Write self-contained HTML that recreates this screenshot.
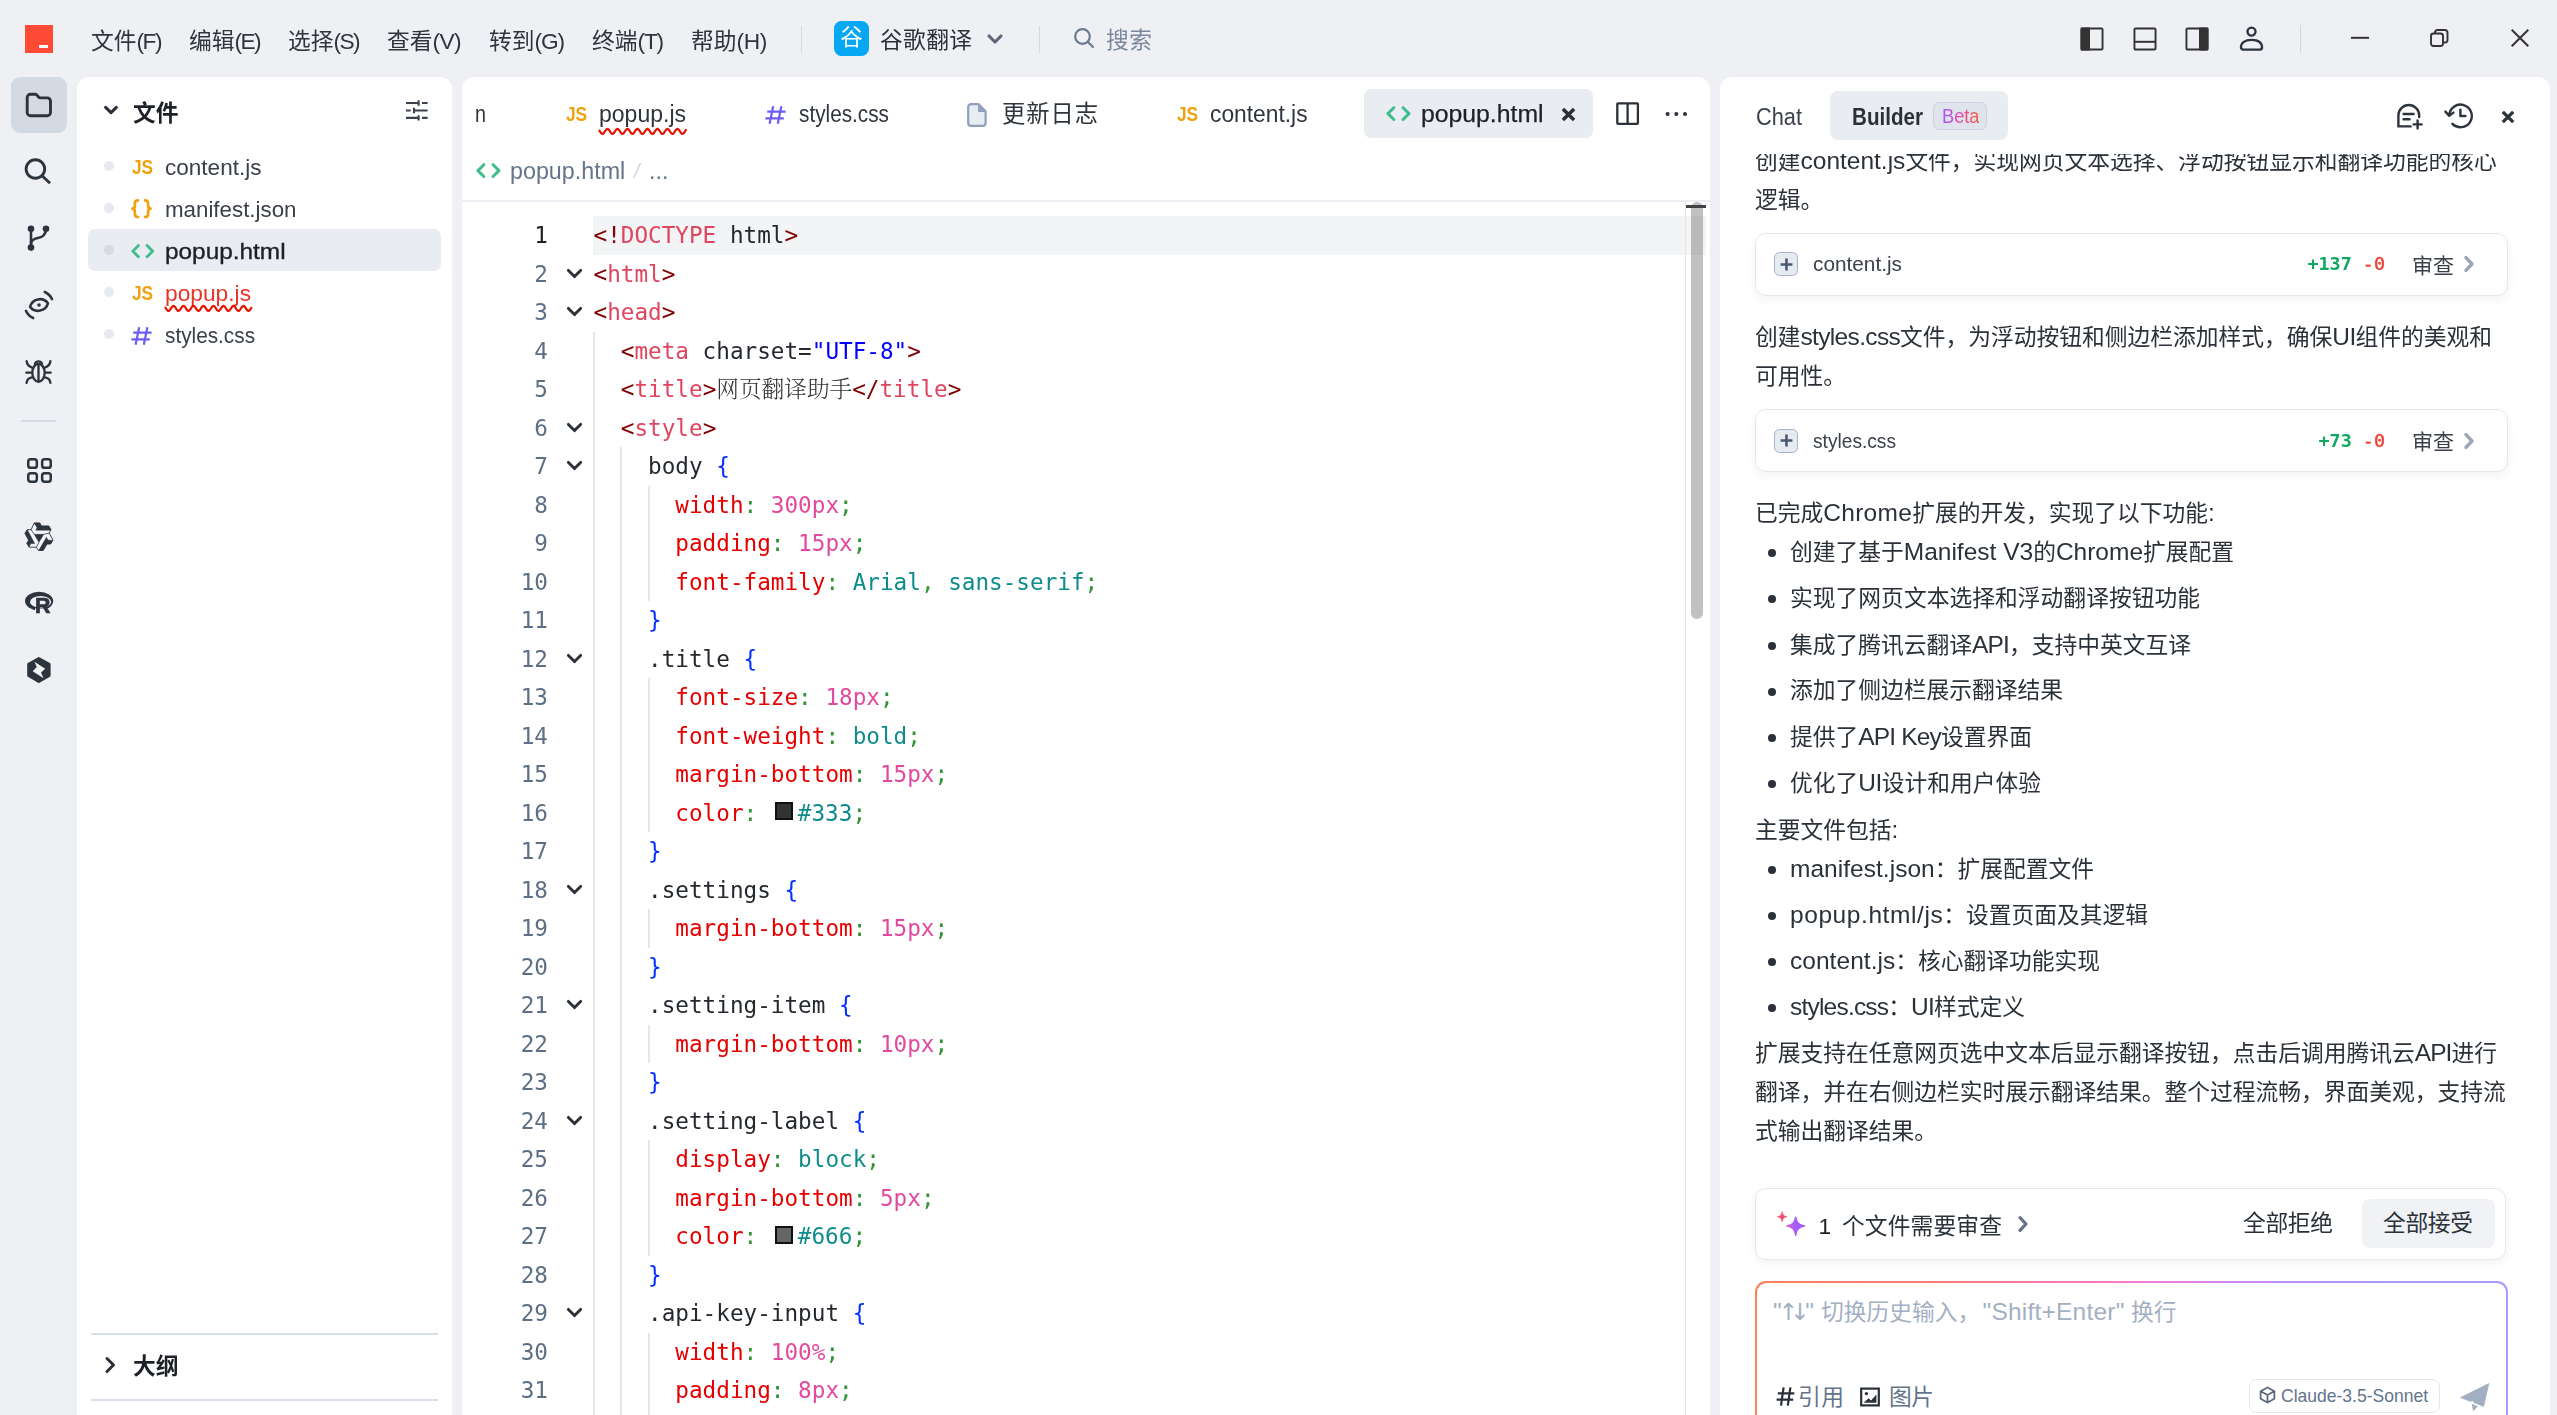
<!DOCTYPE html><html lang="zh-CN"><head><meta charset="UTF-8"><title>popup.html - 谷歌翻译 - Trae</title><style>
*{box-sizing:border-box;margin:0;padding:0}
html,body{width:2557px;height:1415px;overflow:hidden;background:#eef0f4}
body{font-family:"Liberation Sans","Noto Sans CJK SC",sans-serif;color:#2b3139;font-size:22.75px;position:relative;-webkit-font-smoothing:antialiased}
.abs{position:absolute}
.t{position:absolute;white-space:nowrap;line-height:1}
svg{position:absolute;overflow:visible}
.panel{position:absolute;background:#fff;border-radius:12px 12px 0 0}
.mono{font-family:"DejaVu Sans Mono","Liberation Mono","Noto Serif CJK SC",monospace}
/* title bar */
.menu{position:absolute;top:1.5px;height:78px;line-height:78px;font-size:22.75px;color:#2f353d;white-space:nowrap}
/* sidebar */
.row{position:absolute;left:88px;width:353px;height:42px;border-radius:7px}
.row .dot{position:absolute;left:16px;top:14.7px;width:10px;height:10px;border-radius:50%;background:#e6e9ef}
.row .nm{position:absolute;left:77px;top:0;line-height:42px;font-size:22.75px;color:#3a414b;white-space:nowrap}
/* tabs */
.tab{position:absolute;top:91px;height:48px;line-height:47px;font-size:23.3px;color:#2f353d;white-space:nowrap}
/* code */
.ln{position:absolute;left:462px;width:86px;text-align:right;font-size:22.67px;line-height:38.5px;height:38.5px;color:#5d6f85}
.cl{position:absolute;left:593.5px;font-size:22.67px;line-height:38.5px;height:38.5px;white-space:pre;color:#24292f}
.g{position:absolute;width:2px;background:#e4e8ee}
.tb{color:#800000}.tn{color:#e0455f}.bl{color:#0000ff}.br{color:#0431fa}.pr{color:#e50000}.gr{color:#319331}.nu{color:#e2489d}.kw{color:#0e8c8c}
.cj{font-weight:300;color:#333}
.sw{display:inline-block;width:18px;height:18px;border:2px solid #111;margin:0 5px 0 4px;vertical-align:0.5px}
/* chat */
.p{position:absolute;left:1755px;font-size:22.75px;line-height:39.6px;height:39.6px;white-space:nowrap;color:#2b3139}
.li{position:absolute;left:1790px;font-size:22.75px;line-height:39.6px;height:39.6px;white-space:nowrap;color:#2b3139}
.la{font-size:24.5px}
.bu{position:absolute;left:1768px;width:8px;height:8px;border-radius:50%;background:#2b3139}
.card{position:absolute;left:1755px;width:753px;height:63px;border:1.5px solid #e4e8ef;border-radius:11px;background:#fff;box-shadow:0 4px 10px rgba(30,40,60,.05)}
</style></head><body><div style="position:absolute;left:0;top:0;width:2557px;height:1415px;opacity:.999">
<div class="abs" style="left:25px;top:25px;width:28px;height:28px;background:#ff4a36"></div>
<div class="abs" style="left:39px;top:44.5px;width:9px;height:3.5px;background:#fff"></div>
<div class="menu" style="left:91px">文件<span style="letter-spacing:-1.52px;">(F)</span></div>
<div class="menu" style="left:189px">编辑<span style="letter-spacing:-1.61px;">(E)</span></div>
<div class="menu" style="left:288px">选择<span style="letter-spacing:-1.61px;">(S)</span></div>
<div class="menu" style="left:387px">查看<span style="letter-spacing:-0.61px;">(V)</span></div>
<div class="menu" style="left:489px">转到<span style="letter-spacing:-1.12px;">(G)</span></div>
<div class="menu" style="left:592px">终端<span style="letter-spacing:-1.19px;">(T)</span></div>
<div class="menu" style="left:691px">帮助<span style="letter-spacing:-0.36px;">(H)</span></div>
<div class="abs" style="left:800.5px;top:26px;width:1.5px;height:27px;background:#d3d9e3"></div>
<div class="abs" style="left:834px;top:21.3px;width:35px;height:35px;border-radius:7.5px;background:#06a8f4"></div>
<div class="t" style="left:834px;top:21.3px;width:35px;height:35px;line-height:34px;text-align:center;color:#fff;font-size:22.5px">谷</div>
<div class="menu" style="letter-spacing:0.33px;left:880px;top:0.6px;color:#2b3139">谷歌翻译</div>
<svg style="left:987px;top:32px" width="16" height="14" viewBox="0 0 16 14" ><path d="M2 4 L8 10 L14 4" fill="none" stroke="#5d6674" stroke-width="3.1" stroke-linecap="round" stroke-linejoin="round"/></svg>
<div class="abs" style="left:1038.5px;top:26px;width:1.5px;height:27px;background:#d3d9e3"></div>
<svg style="left:1073px;top:27px" width="22" height="22" viewBox="0 0 22 22" ><circle cx="9.5" cy="9.5" r="7.3" fill="none" stroke="#6b7a90" stroke-width="2.2"/><path d="M15 15 L20 20" stroke="#6b7a90" stroke-width="2.2" stroke-linecap="round"/></svg>
<div class="menu" style="letter-spacing:0.50px;left:1106px;top:0.6px;color:#7a879c">搜索</div>
<svg style="left:2080px;top:27px" width="24" height="24" viewBox="0 0 24 24" ><rect x="1.45" y="1.45" width="21.1" height="21.1" rx="1" fill="none" stroke="#333" stroke-width="1.9"/><rect x="0.6" y="0.6" width="9.4" height="22.8" rx="1" fill="#333"/></svg>
<svg style="left:2132.7px;top:27px" width="24" height="24" viewBox="0 0 24 24" ><rect x="1.45" y="1.45" width="21.1" height="21.1" rx="1" fill="none" stroke="#333" stroke-width="1.9"/><rect x="1" y="13.8" width="22" height="2" fill="#333"/></svg>
<svg style="left:2185.3px;top:27px" width="24" height="24" viewBox="0 0 24 24" ><rect x="1.45" y="1.45" width="21.1" height="21.1" rx="1" fill="none" stroke="#333" stroke-width="1.9"/><rect x="14" y="0.6" width="9.4" height="22.8" rx="1" fill="#333"/></svg>
<svg style="left:2239px;top:25px" width="25" height="26" viewBox="0 0 25 26" ><circle cx="12.5" cy="6.6" r="4" fill="none" stroke="#2d3540" stroke-width="2.4"/><path d="M2 22.6 C2 17.6 6 14.9 12.5 14.9 C19 14.9 23 17.6 23 22.6 A2 2 0 0 1 21 24.6 H4 A2 2 0 0 1 2 22.6 Z" fill="none" stroke="#2d3540" stroke-width="2.4" stroke-linejoin="round"/></svg>
<div class="abs" style="left:2299.5px;top:25px;width:1.5px;height:28px;background:#d0d6e2"></div>
<svg style="left:2351px;top:36px" width="18" height="4" viewBox="0 0 18 4" ><path d="M0 1.8 H18" stroke="#333" stroke-width="2"/></svg>
<svg style="left:2430px;top:29px" width="19" height="18" viewBox="0 0 19 18" ><rect x="1" y="4.5" width="12" height="12.5" rx="2.5" fill="none" stroke="#333" stroke-width="1.9"/><path d="M5 4 V3.5 a2.5 2.5 0 0 1 2.5 -2.5 H15 a2.5 2.5 0 0 1 2.5 2.5 V11 a2.5 2.5 0 0 1 -2.5 2.5 H14" fill="none" stroke="#333" stroke-width="1.9"/></svg>
<svg style="left:2511px;top:29px" width="18" height="18" viewBox="0 0 18 18" ><path d="M0.7 0.7 L17.3 17.3 M17.3 0.7 L0.7 17.3" stroke="#333" stroke-width="2"/></svg>
<div class="abs" style="left:11px;top:77px;width:56px;height:56px;border-radius:9px;background:#d4dae3"></div>
<svg style="left:25px;top:92px" width="27" height="26" viewBox="0 0 27 26" ><path d="M2.2 5.6 a3.3 3.3 0 0 1 3.3 -3.3 h4.6 a2.6 2.6 0 0 1 2.1 1 l1.2 1.6 a2.6 2.6 0 0 0 2.1 1 h6.7 a3.3 3.3 0 0 1 3.3 3.3 v11.2 a3.3 3.3 0 0 1 -3.3 3.3 h-16.7 a3.3 3.3 0 0 1 -3.3 -3.3 z" fill="none" stroke="#2d343d" stroke-width="2.9" stroke-linejoin="round"/></svg>
<svg style="left:24px;top:157px" width="28" height="28" viewBox="0 0 28 28" ><circle cx="11.4" cy="12" r="9.3" fill="none" stroke="#2d343d" stroke-width="2.9"/><path d="M18.6 19.2 L26 26.2" stroke="#2d343d" stroke-width="2.9"/></svg>
<svg style="left:27px;top:224px" width="24" height="28" viewBox="0 0 24 28" ><circle cx="4" cy="4.7" r="3.3" fill="#2d343d"/><circle cx="19" cy="4.7" r="3.3" fill="#2d343d"/><circle cx="4" cy="23.6" r="3.3" fill="#2d343d"/><path d="M4 4.7 V23.6" stroke="#2d343d" stroke-width="2.6"/><path d="M19 4.7 C19 13.5 12 13.5 9.5 14.3 C6 15.3 4 17 4 20" fill="none" stroke="#2d343d" stroke-width="2.6"/></svg>
<svg style="left:24px;top:289.8px" width="30" height="30" viewBox="0 0 30 30" ><g transform="rotate(-11 15 15)"><path d="M5.9 15 C9.4 7.4 20.6 7.4 24.1 15 C20.6 22.6 9.4 22.6 5.9 15 Z" fill="none" stroke="#2d343d" stroke-width="2.6" stroke-linecap="round" stroke-linejoin="round"/></g><circle cx="15" cy="15" r="1.8" fill="#2d343d"/><path d="M20.82 1.94 A14.3 14.3 0 0 1 28.06 9.18" fill="none" stroke="#2d343d" stroke-width="2.6" stroke-linecap="round"/><path d="M9.18 28.06 A14.3 14.3 0 0 1 1.94 20.82" fill="none" stroke="#2d343d" stroke-width="2.6" stroke-linecap="round"/></svg>
<svg style="left:25px;top:358px" width="27" height="26" viewBox="0 0 27 26" ><ellipse cx="13.5" cy="14.8" rx="6.2" ry="8.9" fill="none" stroke="#2d343d" stroke-width="2.35" stroke-linecap="round"/><path d="M13.5 6.6 V23.4" fill="none" stroke="#2d343d" stroke-width="2.35" stroke-linecap="round"/><path d="M9.9 6.2 A3.7 3.7 0 0 1 17.1 6.2" fill="none" stroke="#2d343d" stroke-width="2.35" stroke-linecap="round"/><path d="M1.6 3.2 C1.9 6.4 3.9 8.6 7.2 9.6" fill="none" stroke="#2d343d" stroke-width="2.35" stroke-linecap="round"/><path d="M25.4 3.2 C25.1 6.4 23.1 8.6 19.8 9.6" fill="none" stroke="#2d343d" stroke-width="2.35" stroke-linecap="round"/><path d="M1.4 14.6 H6.6" fill="none" stroke="#2d343d" stroke-width="2.35" stroke-linecap="round"/><path d="M20.4 14.6 H25.6" fill="none" stroke="#2d343d" stroke-width="2.35" stroke-linecap="round"/><path d="M1.6 24.8 C1.9 21.6 3.9 19.8 7.2 19.4" fill="none" stroke="#2d343d" stroke-width="2.35" stroke-linecap="round"/><path d="M25.4 24.8 C25.1 21.6 23.1 19.8 19.8 19.4" fill="none" stroke="#2d343d" stroke-width="2.35" stroke-linecap="round"/></svg>
<div class="abs" style="left:21px;top:420px;width:35px;height:1.5px;background:#d5dbe6"></div>
<svg style="left:27px;top:457.7px" width="25" height="25" viewBox="0 0 25 25" ><rect x="1.25" y="1.25" width="8.6" height="8.6" rx="2.4" fill="none" stroke="#2d343d" stroke-width="2.5"/><rect x="1.25" y="15.15" width="8.6" height="8.6" rx="2.4" fill="none" stroke="#2d343d" stroke-width="2.5"/><rect x="15.15" y="1.25" width="8.6" height="8.6" rx="2.4" fill="none" stroke="#2d343d" stroke-width="2.5"/><rect x="15.15" y="15.15" width="8.6" height="8.6" rx="2.4" fill="none" stroke="#2d343d" stroke-width="2.5"/></svg>
<svg style="left:18px;top:515px" width="42" height="42" viewBox="0 0 42 42" ><polygon points="16.2,8.0 21.7,8.0 23.5,11.1 30.9,11.1 32.9,14.8 31.2,18.1 34.9,24.8 32.7,28.9 28.9,28.9 25.2,35.5 20.5,35.5 18.4,32.2 11.1,32.2 8.9,28.3 10.7,25.2 7.0,18.3 9.2,14.7 13.1,14.7" fill="#f5f6f9" stroke="#2d343d" stroke-width="0.9" stroke-linejoin="round"/><polygon points="16.5,8.0 21.7,8.0 23.4,11.1 30.9,11.1 32.9,14.7 32.6,15.2 17.8,15.2 19.1,12.8 16.4,8.4" fill="#2d343d" stroke="#2d343d" stroke-width="0.5" stroke-linejoin="round"/><polygon points="9.3,14.8 16.7,28.6 12.8,28.6 11.2,31.8 8.9,28.3 10.8,25.2 7.1,18.4" fill="#2d343d" stroke="#2d343d" stroke-width="0.5" stroke-linejoin="round"/><polygon points="16.2,19.3 25.8,19.3 20.9,27.3" fill="#2d343d" stroke="#2d343d" stroke-width="0.5" stroke-linejoin="round"/><polygon points="28.5,22.3 30.0,25.2 34.7,25.2 32.7,28.9 28.9,28.9 25.2,35.3 20.8,35.3" fill="#2d343d" stroke="#2d343d" stroke-width="0.5" stroke-linejoin="round"/><path d="M13.1 14.7 L16.2 19.3 M31.2 18.1 L25.8 19.3 M18.4 32.2 L20.9 27.3" stroke="#2d343d" stroke-width="0.8" fill="none"/></svg>
<svg style="left:18px;top:582px" width="42" height="42" viewBox="0 0 42 42" ><path fill-rule="evenodd" fill="#2d343d" d="M7 19.1 A14.1 9.3 0 1 0 35.2 19.1 A14.1 9.3 0 1 0 7 19.1 Z M12 19.9 A10.6 5.9 0 1 1 33.2 19.9 A10.6 5.9 0 1 1 12 19.9 Z"/><rect x="17" y="26.4" width="17" height="7" fill="#eef0f4"/></svg><div class="t" style="left:34.7px;top:594.6px;line-height:22px;font-size:22px;font-weight:700;color:#2d343d;-webkit-text-stroke:0.7px #2d343d;transform:scaleX(.97);transform-origin:0 50%">R</div>
<svg style="left:18px;top:649px" width="42" height="42" viewBox="0 0 42 42" ><path d="M20.8 9.3 L31.3 15.2 V26.6 L20.8 32.6 L10.5 26.6 V15.2 Z" fill="#2d343d" stroke="#2d343d" stroke-width="2.6" stroke-linejoin="round"/><path d="M16.5 12.8 L27.2 19.7 L23.0 23.4 L25.5 29.2 L14.7 22.3 L18.8 18.1 Z" fill="#f0f1f5"/></svg>
<div class="panel" style="left:77px;top:77px;width:375px;height:1338px"></div>
<svg style="left:102.5px;top:104.3px" width="16" height="14" viewBox="0 0 16 14" ><path d="M2.6 3.3 L8 8.6 L13.4 3.3" fill="none" stroke="#2b3139" stroke-width="3.1" stroke-linecap="round" stroke-linejoin="round"/></svg>
<div class="t" style="left:133px;top:92px;line-height:42px;font-size:22.75px;font-weight:700;color:#1d2127">文件</div>
<svg style="left:406.2px;top:100.1px" width="22" height="21" viewBox="0 0 22 21" ><path d="M0 3 H13.4 M16 3 H21.6 M12.6 0.3 V5.7" stroke="#3a424d" stroke-width="2.1" stroke-linecap="butt" fill="none"/><path d="M0 10.45 H4.7 M7.2 10.45 H21.6 M8 7.75 V13.15" stroke="#3a424d" stroke-width="2.1" stroke-linecap="butt" fill="none"/><path d="M0 17.9 H13.4 M16 17.9 H21.6 M12.6 15.2 V20.6" stroke="#3a424d" stroke-width="2.1" stroke-linecap="butt" fill="none"/></svg>
<div class="row" style="top:146px;"><div class="dot"></div><div class="nm" style="transform:scaleX(0.991);transform-origin:0 50%;color:#3a414b">content.js</div></div>
<div class="t" style="left:131.6px;top:155.7px;line-height:22px;font-size:20px;font-weight:700;color:#f0a10f;transform:scaleX(.865);transform-origin:0 50%">JS</div>
<div class="row" style="top:188px;"><div class="dot"></div><div class="nm" style="transform:scaleX(0.981);transform-origin:0 50%;color:#3a414b">manifest.json</div></div>
<svg style="left:131px;top:198.5px" width="21" height="20" viewBox="0 0 21 20" ><path d="M7 1.4 C4.6 1.4 3.9 2.4 3.9 4.2 V6.8 C3.9 8.6 3.2 9.5 1.4 9.7 C3.2 9.9 3.9 10.8 3.9 12.6 V15.2 C3.9 17 4.6 18 7 18" fill="none" stroke="#f0a10f" stroke-width="2.7" stroke-linecap="round" stroke-linejoin="round"/><path d="M14 1.4 C16.4 1.4 17.1 2.4 17.1 4.2 V6.8 C17.1 8.6 17.8 9.5 19.6 9.7 C17.8 9.9 17.1 10.8 17.1 12.6 V15.2 C17.1 17 16.4 18 14 18" fill="none" stroke="#f0a10f" stroke-width="2.7" stroke-linecap="round" stroke-linejoin="round"/></svg>
<div class="abs" style="left:88px;top:229px;width:353px;height:42px;border-radius:7px;background:#e9ecf1"></div>
<div class="row" style="top:230px;"><div class="dot" style="background:#d5d9e2"></div><div class="nm" style="transform:scaleX(1.071);transform-origin:0 50%;color:#1d2127;-webkit-text-stroke:0.35px #1d2127">popup.html</div></div>
<svg style="left:131px;top:243.8px" width="23.5" height="14.4" viewBox="0 0 23.5 14.4" ><g transform="scale(1.0)"><path d="M7.4 1.6 L1.8 7.2 L7.4 12.8" fill="none" stroke="#3dbe8b" stroke-width="2.8" stroke-linecap="round" stroke-linejoin="round"/><path d="M16.1 1.6 L21.7 7.2 L16.1 12.8" fill="none" stroke="#3dbe8b" stroke-width="2.8" stroke-linecap="round" stroke-linejoin="round"/></g></svg>
<div class="row" style="top:272px;"><div class="dot"></div><div class="nm" style="color:#e8352a">popup.js</div></div>
<div class="t" style="left:131.6px;top:281.7px;line-height:22px;font-size:20px;font-weight:700;color:#f0a10f;transform:scaleX(.865);transform-origin:0 50%">JS</div>
<div class="row" style="top:314px;"><div class="dot"></div><div class="nm" style="transform:scaleX(0.913);transform-origin:0 50%;color:#3a414b">styles.css</div></div>
<svg style="left:131px;top:326.5px" width="21" height="18" viewBox="0 0 21 18" ><path d="M8.2 0.3 L4.6 17.7 M16.4 0.3 L12.8 17.7 M2.2 5.6 H20.6 M0.4 12.4 H18.8" fill="none" stroke="#6c5cf5" stroke-width="2.2" stroke-linecap="butt"/></svg>
<svg style="left:165px;top:305px" width="87" height="8" viewBox="0 0 87 8" ><polyline points="0.0,1.99 0.7,3.00 1.4,4.09 2.1,5.05 2.8,5.69 3.5,5.90 4.2,5.63 4.9,4.94 5.6,3.95 6.3,2.86 7.0,1.87 7.7,1.18 8.4,0.90 9.1,1.10 9.8,1.74 10.5,2.70 11.2,3.78 11.9,4.80 12.6,5.55 13.3,5.89 14.0,5.75 14.7,5.17 15.4,4.25 16.1,3.17 16.8,2.13 17.5,1.34 18.2,0.93 18.9,1.00 19.6,1.52 20.3,2.40 21.0,3.47 21.7,4.53 22.4,5.37 23.1,5.84 23.8,5.84 24.5,5.38 25.2,4.54 25.9,3.49 26.6,2.41 27.3,1.53 28.0,1.00 28.7,0.93 29.4,1.33 30.1,2.12 30.8,3.16 31.5,4.24 32.2,5.16 32.9,5.75 33.6,5.89 34.3,5.56 35.0,4.81 35.7,3.80 36.4,2.71 37.1,1.75 37.8,1.11 38.5,0.90 39.2,1.17 39.9,1.86 40.6,2.85 41.3,3.94 42.0,4.93 42.7,5.62 43.4,5.90 44.1,5.70 44.8,5.06 45.5,4.10 46.2,3.02 46.9,2.00 47.6,1.25 48.3,0.91 49.0,1.05 49.7,1.63 50.4,2.55 51.1,3.63 51.8,4.67 52.5,5.46 53.2,5.87 53.9,5.80 54.6,5.28 55.3,4.40 56.0,3.33 56.7,2.27 57.4,1.43 58.1,0.96 58.8,0.96 59.5,1.42 60.2,2.26 60.9,3.31 61.6,4.39 62.3,5.27 63.0,5.80 63.7,5.87 64.4,5.47 65.1,4.68 65.8,3.64 66.5,2.56 67.2,1.64 67.9,1.05 68.6,0.91 69.3,1.24 70.0,1.99 70.7,3.00 71.4,4.09 72.1,5.05 72.8,5.69 73.5,5.90 74.2,5.63 74.9,4.94 75.6,3.95 76.3,2.86 77.0,1.87 77.7,1.18 78.4,0.90 79.1,1.10 79.8,1.74 80.5,2.70 81.2,3.78 81.9,4.80 82.6,5.55 83.3,5.89 84.0,5.75 84.7,5.17 85.4,4.25 86.1,3.17 86.8,2.13" fill="none" stroke="#e51400" stroke-width="2.2" stroke-linejoin="round"/></svg>
<div class="abs" style="left:91px;top:1333px;width:347px;height:1.5px;background:#d8deea"></div>
<svg style="left:104px;top:1356px" width="12" height="18" viewBox="0 0 12 18" ><path d="M3 2.5 L9.5 9 L3 15.5" fill="none" stroke="#2b3139" stroke-width="3" stroke-linecap="round" stroke-linejoin="round"/></svg>
<div class="t" style="left:133px;top:1345px;line-height:42px;font-size:22.75px;font-weight:700;color:#1d2127">大纲</div>
<div class="abs" style="left:91px;top:1399px;width:347px;height:1.5px;background:#d8deea"></div>
<div class="panel" style="left:462px;top:77px;width:1248px;height:1338px"></div>
<div class="tab" style="transform:scaleX(0.848);transform-origin:0 50%;left:475px">n</div>
<div class="t" style="left:565.6px;top:102.7px;line-height:22px;font-size:20px;font-weight:700;color:#f0a10f;transform:scaleX(.865);transform-origin:0 50%">JS</div>
<div class="tab" style="transform:scaleX(0.988);transform-origin:0 50%;left:599px">popup.js</div>
<svg style="left:599px;top:128px" width="88" height="8" viewBox="0 0 88 8" ><polyline points="0.0,1.99 0.7,3.00 1.4,4.09 2.1,5.05 2.8,5.69 3.5,5.90 4.2,5.63 4.9,4.94 5.6,3.95 6.3,2.86 7.0,1.87 7.7,1.18 8.4,0.90 9.1,1.10 9.8,1.74 10.5,2.70 11.2,3.78 11.9,4.80 12.6,5.55 13.3,5.89 14.0,5.75 14.7,5.17 15.4,4.25 16.1,3.17 16.8,2.13 17.5,1.34 18.2,0.93 18.9,1.00 19.6,1.52 20.3,2.40 21.0,3.47 21.7,4.53 22.4,5.37 23.1,5.84 23.8,5.84 24.5,5.38 25.2,4.54 25.9,3.49 26.6,2.41 27.3,1.53 28.0,1.00 28.7,0.93 29.4,1.33 30.1,2.12 30.8,3.16 31.5,4.24 32.2,5.16 32.9,5.75 33.6,5.89 34.3,5.56 35.0,4.81 35.7,3.80 36.4,2.71 37.1,1.75 37.8,1.11 38.5,0.90 39.2,1.17 39.9,1.86 40.6,2.85 41.3,3.94 42.0,4.93 42.7,5.62 43.4,5.90 44.1,5.70 44.8,5.06 45.5,4.10 46.2,3.02 46.9,2.00 47.6,1.25 48.3,0.91 49.0,1.05 49.7,1.63 50.4,2.55 51.1,3.63 51.8,4.67 52.5,5.46 53.2,5.87 53.9,5.80 54.6,5.28 55.3,4.40 56.0,3.33 56.7,2.27 57.4,1.43 58.1,0.96 58.8,0.96 59.5,1.42 60.2,2.26 60.9,3.31 61.6,4.39 62.3,5.27 63.0,5.80 63.7,5.87 64.4,5.47 65.1,4.68 65.8,3.64 66.5,2.56 67.2,1.64 67.9,1.05 68.6,0.91 69.3,1.24 70.0,1.99 70.7,3.00 71.4,4.09 72.1,5.05 72.8,5.69 73.5,5.90 74.2,5.63 74.9,4.94 75.6,3.95 76.3,2.86 77.0,1.87 77.7,1.18 78.4,0.90 79.1,1.10 79.8,1.74 80.5,2.70 81.2,3.78 81.9,4.80 82.6,5.55 83.3,5.89 84.0,5.75 84.7,5.17 85.4,4.25 86.1,3.17 86.8,2.13 87.5,1.34" fill="none" stroke="#e51400" stroke-width="2.2" stroke-linejoin="round"/></svg>
<svg style="left:765px;top:105.5px" width="21" height="18" viewBox="0 0 21 18" ><path d="M8.2 0.3 L4.6 17.7 M16.4 0.3 L12.8 17.7 M2.2 5.6 H20.6 M0.4 12.4 H18.8" fill="none" stroke="#6c5cf5" stroke-width="2.2" stroke-linecap="butt"/></svg>
<div class="tab" style="transform:scaleX(0.891);transform-origin:0 50%;left:799px">styles.css</div>
<svg style="left:967px;top:102.5px" width="20" height="24" viewBox="0 0 20 24" ><path d="M4 1.2 H11.6 L18.6 8.2 V20 A2.8 2.8 0 0 1 15.8 22.8 H4 A2.8 2.8 0 0 1 1.2 20 V4 A2.8 2.8 0 0 1 4 1.2 Z" fill="#e8ecf3" stroke="#8f9fbe" stroke-width="2.2" stroke-linejoin="round"/><path d="M11.8 1.6 L18.4 8.2 H11.8 Z" fill="#93a2c0" stroke="#8f9fbe" stroke-width="1.4" stroke-linejoin="round"/></svg>
<div class="tab" style="letter-spacing:0.94px;left:1002px">更新日志</div>
<div class="t" style="left:1176.6px;top:102.7px;line-height:22px;font-size:20px;font-weight:700;color:#f0a10f;transform:scaleX(.865);transform-origin:0 50%">JS</div>
<div class="tab" style="transform:scaleX(0.978);transform-origin:0 50%;left:1210px">content.js</div>
<div class="abs" style="left:1364px;top:89px;width:229px;height:49px;border-radius:7px;background:#e9ecf1"></div>
<svg style="left:1385.5px;top:106.368px" width="24.91" height="15.264000000000001" viewBox="0 0 24.91 15.264000000000001" ><g transform="scale(1.06)"><path d="M7.4 1.6 L1.8 7.2 L7.4 12.8" fill="none" stroke="#3dbe8b" stroke-width="2.8" stroke-linecap="round" stroke-linejoin="round"/><path d="M16.1 1.6 L21.7 7.2 L16.1 12.8" fill="none" stroke="#3dbe8b" stroke-width="2.8" stroke-linecap="round" stroke-linejoin="round"/></g></svg>
<div class="tab" style="transform:scaleX(1.063);transform-origin:0 50%;left:1420.5px;color:#1d2127;-webkit-text-stroke:0.25px #1d2127">popup.html</div>
<svg style="left:1561px;top:106.8px" width="15" height="15" viewBox="0 0 15 15" ><path d="M1.9 1.9 L13.1 13.1 M13.1 1.9 L1.9 13.1" stroke="#2b2f36" stroke-width="3.5" stroke-linecap="butt"/></svg>
<svg style="left:1615.8px;top:102.3px" width="24" height="24" viewBox="0 0 24 24" ><rect x="1.3" y="1.3" width="20.6" height="20.6" rx="0.8" fill="none" stroke="#2b3139" stroke-width="2.3"/><path d="M11.6 1 V22" stroke="#2b3139" stroke-width="2.3"/></svg>
<svg style="left:1665px;top:111px" width="23" height="6" viewBox="0 0 23 6" ><circle cx="2.6" cy="3" r="2" fill="#2b3139"/><circle cx="11.3" cy="3" r="2" fill="#2b3139"/><circle cx="20" cy="3" r="2" fill="#2b3139"/></svg>
<svg style="left:475.5px;top:163.368px" width="24.91" height="15.264000000000001" viewBox="0 0 24.91 15.264000000000001" ><g transform="scale(1.06)"><path d="M7.4 1.6 L1.8 7.2 L7.4 12.8" fill="none" stroke="#3dbe8b" stroke-width="2.8" stroke-linecap="round" stroke-linejoin="round"/><path d="M16.1 1.6 L21.7 7.2 L16.1 12.8" fill="none" stroke="#3dbe8b" stroke-width="2.8" stroke-linecap="round" stroke-linejoin="round"/></g></svg>
<div class="t" style="left:510px;top:151px;line-height:40px;font-size:23.3px;color:#64748b">popup.html</div>
<div class="t" style="left:634px;top:151px;line-height:40px;font-size:20px;color:#cdd5e3;font-style:italic">/</div>
<div class="t" style="left:649px;top:151px;line-height:40px;font-size:23.3px;color:#64748b">...</div>
<div class="abs" style="left:462px;top:200.3px;width:1248px;height:1.5px;background:#ebeef3"></div>
<div class="abs" style="left:593px;top:216px;width:1113px;height:38.5px;background:#f3f4f6"></div>
<div class="g" style="left:593px;top:331.5px;height:1083.5px"></div>
<div class="g" style="left:620.3px;top:447.0px;height:968.0px"></div>
<div class="g" style="left:647.6px;top:485.5px;height:115.5px"></div>
<div class="g" style="left:647.6px;top:678.0px;height:154.0px"></div>
<div class="g" style="left:647.6px;top:909.0px;height:38.5px"></div>
<div class="g" style="left:647.6px;top:1024.5px;height:38.5px"></div>
<div class="g" style="left:647.6px;top:1140.0px;height:115.5px"></div>
<div class="g" style="left:647.6px;top:1332.5px;height:115.5px"></div>
<div class="ln mono" style="top:216.0px;color:#1d2127">1</div>
<div class="cl mono" style="top:216.0px"><span class="tb">&lt;!</span><span class="tn">DOCTYPE</span> html<span class="tb">&gt;</span></div>
<div class="ln mono" style="top:254.5px">2</div>
<div class="cl mono" style="top:254.5px"><span class="tb">&lt;</span><span class="tn">html</span><span class="tb">&gt;</span></div>
<svg style="left:566px;top:266.5px" width="17" height="14" viewBox="0 0 17 14" ><path d="M2.4 3.4 L8.5 9.6 L14.6 3.4" fill="none" stroke="#2b3139" stroke-width="2.9" stroke-linecap="round" stroke-linejoin="round"/></svg>
<div class="ln mono" style="top:293.0px">3</div>
<div class="cl mono" style="top:293.0px"><span class="tb">&lt;</span><span class="tn">head</span><span class="tb">&gt;</span></div>
<svg style="left:566px;top:305.0px" width="17" height="14" viewBox="0 0 17 14" ><path d="M2.4 3.4 L8.5 9.6 L14.6 3.4" fill="none" stroke="#2b3139" stroke-width="2.9" stroke-linecap="round" stroke-linejoin="round"/></svg>
<div class="ln mono" style="top:331.5px">4</div>
<div class="cl mono" style="top:331.5px">  <span class="tb">&lt;</span><span class="tn">meta</span> charset=<span class="bl">"UTF-8"</span><span class="tb">&gt;</span></div>
<div class="ln mono" style="top:370.0px">5</div>
<div class="cl mono" style="top:370.0px">  <span class="tb">&lt;</span><span class="tn">title</span><span class="tb">&gt;</span><span class="cj">网页翻译助手</span><span class="tb">&lt;/</span><span class="tn">title</span><span class="tb">&gt;</span></div>
<div class="ln mono" style="top:408.5px">6</div>
<div class="cl mono" style="top:408.5px">  <span class="tb">&lt;</span><span class="tn">style</span><span class="tb">&gt;</span></div>
<svg style="left:566px;top:420.5px" width="17" height="14" viewBox="0 0 17 14" ><path d="M2.4 3.4 L8.5 9.6 L14.6 3.4" fill="none" stroke="#2b3139" stroke-width="2.9" stroke-linecap="round" stroke-linejoin="round"/></svg>
<div class="ln mono" style="top:447.0px">7</div>
<div class="cl mono" style="top:447.0px">    body <span class="br">{</span></div>
<svg style="left:566px;top:459.0px" width="17" height="14" viewBox="0 0 17 14" ><path d="M2.4 3.4 L8.5 9.6 L14.6 3.4" fill="none" stroke="#2b3139" stroke-width="2.9" stroke-linecap="round" stroke-linejoin="round"/></svg>
<div class="ln mono" style="top:485.5px">8</div>
<div class="cl mono" style="top:485.5px">      <span class="pr">width</span><span class="gr">:</span> <span class="nu">300px</span><span class="gr">;</span></div>
<div class="ln mono" style="top:524.0px">9</div>
<div class="cl mono" style="top:524.0px">      <span class="pr">padding</span><span class="gr">:</span> <span class="nu">15px</span><span class="gr">;</span></div>
<div class="ln mono" style="top:562.5px">10</div>
<div class="cl mono" style="top:562.5px">      <span class="pr">font-family</span><span class="gr">:</span> <span class="kw">Arial</span><span class="gr">,</span> <span class="kw">sans-serif</span><span class="gr">;</span></div>
<div class="ln mono" style="top:601.0px">11</div>
<div class="cl mono" style="top:601.0px">    <span class="br">}</span></div>
<div class="ln mono" style="top:639.5px">12</div>
<div class="cl mono" style="top:639.5px">    .title <span class="br">{</span></div>
<svg style="left:566px;top:651.5px" width="17" height="14" viewBox="0 0 17 14" ><path d="M2.4 3.4 L8.5 9.6 L14.6 3.4" fill="none" stroke="#2b3139" stroke-width="2.9" stroke-linecap="round" stroke-linejoin="round"/></svg>
<div class="ln mono" style="top:678.0px">13</div>
<div class="cl mono" style="top:678.0px">      <span class="pr">font-size</span><span class="gr">:</span> <span class="nu">18px</span><span class="gr">;</span></div>
<div class="ln mono" style="top:716.5px">14</div>
<div class="cl mono" style="top:716.5px">      <span class="pr">font-weight</span><span class="gr">:</span> <span class="kw">bold</span><span class="gr">;</span></div>
<div class="ln mono" style="top:755.0px">15</div>
<div class="cl mono" style="top:755.0px">      <span class="pr">margin-bottom</span><span class="gr">:</span> <span class="nu">15px</span><span class="gr">;</span></div>
<div class="ln mono" style="top:793.5px">16</div>
<div class="cl mono" style="top:793.5px">      <span class="pr">color</span><span class="gr">:</span> <span class="sw" style="background:#333"></span><span class="kw">#333</span><span class="gr">;</span></div>
<div class="ln mono" style="top:832.0px">17</div>
<div class="cl mono" style="top:832.0px">    <span class="br">}</span></div>
<div class="ln mono" style="top:870.5px">18</div>
<div class="cl mono" style="top:870.5px">    .settings <span class="br">{</span></div>
<svg style="left:566px;top:882.5px" width="17" height="14" viewBox="0 0 17 14" ><path d="M2.4 3.4 L8.5 9.6 L14.6 3.4" fill="none" stroke="#2b3139" stroke-width="2.9" stroke-linecap="round" stroke-linejoin="round"/></svg>
<div class="ln mono" style="top:909.0px">19</div>
<div class="cl mono" style="top:909.0px">      <span class="pr">margin-bottom</span><span class="gr">:</span> <span class="nu">15px</span><span class="gr">;</span></div>
<div class="ln mono" style="top:947.5px">20</div>
<div class="cl mono" style="top:947.5px">    <span class="br">}</span></div>
<div class="ln mono" style="top:986.0px">21</div>
<div class="cl mono" style="top:986.0px">    .setting-item <span class="br">{</span></div>
<svg style="left:566px;top:998.0px" width="17" height="14" viewBox="0 0 17 14" ><path d="M2.4 3.4 L8.5 9.6 L14.6 3.4" fill="none" stroke="#2b3139" stroke-width="2.9" stroke-linecap="round" stroke-linejoin="round"/></svg>
<div class="ln mono" style="top:1024.5px">22</div>
<div class="cl mono" style="top:1024.5px">      <span class="pr">margin-bottom</span><span class="gr">:</span> <span class="nu">10px</span><span class="gr">;</span></div>
<div class="ln mono" style="top:1063.0px">23</div>
<div class="cl mono" style="top:1063.0px">    <span class="br">}</span></div>
<div class="ln mono" style="top:1101.5px">24</div>
<div class="cl mono" style="top:1101.5px">    .setting-label <span class="br">{</span></div>
<svg style="left:566px;top:1113.5px" width="17" height="14" viewBox="0 0 17 14" ><path d="M2.4 3.4 L8.5 9.6 L14.6 3.4" fill="none" stroke="#2b3139" stroke-width="2.9" stroke-linecap="round" stroke-linejoin="round"/></svg>
<div class="ln mono" style="top:1140.0px">25</div>
<div class="cl mono" style="top:1140.0px">      <span class="pr">display</span><span class="gr">:</span> <span class="kw">block</span><span class="gr">;</span></div>
<div class="ln mono" style="top:1178.5px">26</div>
<div class="cl mono" style="top:1178.5px">      <span class="pr">margin-bottom</span><span class="gr">:</span> <span class="nu">5px</span><span class="gr">;</span></div>
<div class="ln mono" style="top:1217.0px">27</div>
<div class="cl mono" style="top:1217.0px">      <span class="pr">color</span><span class="gr">:</span> <span class="sw" style="background:#666"></span><span class="kw">#666</span><span class="gr">;</span></div>
<div class="ln mono" style="top:1255.5px">28</div>
<div class="cl mono" style="top:1255.5px">    <span class="br">}</span></div>
<div class="ln mono" style="top:1294.0px">29</div>
<div class="cl mono" style="top:1294.0px">    .api-key-input <span class="br">{</span></div>
<svg style="left:566px;top:1306.0px" width="17" height="14" viewBox="0 0 17 14" ><path d="M2.4 3.4 L8.5 9.6 L14.6 3.4" fill="none" stroke="#2b3139" stroke-width="2.9" stroke-linecap="round" stroke-linejoin="round"/></svg>
<div class="ln mono" style="top:1332.5px">30</div>
<div class="cl mono" style="top:1332.5px">      <span class="pr">width</span><span class="gr">:</span> <span class="nu">100%</span><span class="gr">;</span></div>
<div class="ln mono" style="top:1371.0px">31</div>
<div class="cl mono" style="top:1371.0px">      <span class="pr">padding</span><span class="gr">:</span> <span class="nu">8px</span><span class="gr">;</span></div>
<div class="abs" style="left:1685px;top:202px;width:1.2px;height:1213px;background:#e6e6e6"></div>
<div class="abs" style="left:1691px;top:202px;width:12px;height:417px;background:rgba(100,100,100,.4);border-radius:6px"></div>
<div class="abs" style="left:1686px;top:205px;width:20px;height:3px;background:#424242"></div>
<div class="panel" style="left:1720px;top:77px;width:830px;height:1338px"></div>
<div class="t" style="transform:scaleX(0.927);transform-origin:0 50%;left:1755.5px;top:95px;line-height:44px;font-size:23.5px;color:#3a414b">Chat</div>
<div class="abs" style="left:1830px;top:91px;width:178px;height:49px;border-radius:8px;background:#e9ecf1"></div>
<div class="t" style="transform:scaleX(0.877);transform-origin:0 50%;left:1851.5px;top:95px;line-height:44px;font-size:23.5px;font-weight:700;color:#2b3139">Builder</div>
<div class="abs" style="left:1933px;top:102px;width:54px;height:27.5px;border-radius:6px;background:#dfe3eb;border:1.5px solid #cbd3df"></div>
<div class="t" style="transform:scaleX(0.935);transform-origin:0 50%;left:1942px;top:102px;line-height:28px;font-size:19.5px;background:linear-gradient(90deg,#a855f7 5%,#ec4899 55%,#f2613a 100%);-webkit-background-clip:text;background-clip:text;color:transparent">Beta</div>
<svg style="left:2396px;top:103px" width="28" height="26" viewBox="0 0 28 26" ><path d="M14.6 23.4 H2.4 V12.4 A10.4 10.4 0 0 1 23.2 12.4 V14" fill="none" stroke="#2d343d" stroke-width="2.4" stroke-linecap="round" stroke-linejoin="round"/><path d="M7.6 11 H17.6 M7.6 16.2 H13.6" fill="none" stroke="#2d343d" stroke-width="2.4" stroke-linecap="round" stroke-linejoin="round"/><path d="M21.6 17.4 V25.4 M17.6 21.4 H25.6" fill="none" stroke="#2d343d" stroke-width="2.4" stroke-linecap="round" stroke-linejoin="round"/></svg>
<svg style="left:2444px;top:102px" width="30" height="27" viewBox="0 0 30 27" ><path d="M5.2 13.4 A11.3 11.3 0 1 1 8.4 21.8" fill="none" stroke="#2d343d" stroke-width="2.4" stroke-linecap="round" stroke-linejoin="round"/><path d="M1.4 9.6 L5.1 13.8 L9.4 10.6" fill="none" stroke="#2d343d" stroke-width="2.4" stroke-linecap="round" stroke-linejoin="round"/><path d="M16.4 7.6 V14 H21.4" fill="none" stroke="#2d343d" stroke-width="2.4" stroke-linecap="round" stroke-linejoin="round"/></svg>
<svg style="left:2501px;top:109.5px" width="14" height="14" viewBox="0 0 14 14" ><path d="M1.8 1.8 L12.2 12.2 M12.2 1.8 L1.8 12.2" stroke="#2d343d" stroke-width="3.3"/></svg>
<div class="abs" style="left:1720px;top:154px;width:830px;height:1030px;overflow:hidden"><div class="abs" style="left:-1720px;top:-154px;width:2557px;height:1415px">
<div class="p" style="top:141.2px">创建<span class="la">content.js</span>文件，实现网页文本选择、浮动按钮显示和翻译功能的核心</div>
<div class="p" style="top:180.6px">逻辑。</div>
<div class="card" style="top:233px"></div>
<div class="abs" style="left:1774px;top:252px;width:24px;height:24px;border-radius:5.5px;background:#e6ebf2;border:1.75px solid #a5b4cb"></div>
<svg style="left:1779.5px;top:257.5px" width="13" height="13" viewBox="0 0 13 13" ><path d="M6.5 0.6 V12.4 M0.6 6.5 H12.4" stroke="#4b5a70" stroke-width="2.6"/></svg>
<div class="t" style="transform:scaleX(0.990);transform-origin:0 50%;left:1812.5px;top:244px;line-height:40px;font-size:21px;color:#3a414b">content.js</div>
<div class="t mono" style="right:172px;top:244px;line-height:40px;font-size:18.4px;font-weight:700"><span style="color:#10a860">+137</span> <span style="color:#ee4036;font-weight:400;-webkit-text-stroke:0.45px #ee4036">-0</span></div>
<div class="t" style="left:2412px;top:245.8px;line-height:40px;font-size:21px;color:#3a414b">审查</div>
<svg style="left:2462.6px;top:255.4px" width="12" height="18" viewBox="0 0 12 18" ><path d="M3 2.6 L9 9 L3 15.4" fill="none" stroke="#9aa7b8" stroke-width="3.5" stroke-linecap="round" stroke-linejoin="round"/></svg>
<div class="p" style="top:317.2px">创建<span class="la" style="letter-spacing:-0.66px;">styles.css</span>文件，为浮动按钮和侧边栏添加样式，确保<span class="la" style="letter-spacing:-0.66px;">UI</span>组件的美观和</div>
<div class="p" style="top:356.6px">可用性。</div>
<div class="card" style="top:408.6px"></div>
<div class="abs" style="left:1774px;top:428.5px;width:24px;height:24px;border-radius:5.5px;background:#e6ebf2;border:1.75px solid #a5b4cb"></div>
<svg style="left:1779.5px;top:434.0px" width="13" height="13" viewBox="0 0 13 13" ><path d="M6.5 0.6 V12.4 M0.6 6.5 H12.4" stroke="#4b5a70" stroke-width="2.6"/></svg>
<div class="t" style="transform:scaleX(0.912);transform-origin:0 50%;left:1812.5px;top:420.5px;line-height:40px;font-size:21px;color:#3a414b">styles.css</div>
<div class="t mono" style="right:172px;top:420.5px;line-height:40px;font-size:18.4px;font-weight:700"><span style="color:#10a860">+73</span> <span style="color:#ee4036;font-weight:400;-webkit-text-stroke:0.45px #ee4036">-0</span></div>
<div class="t" style="left:2412px;top:422.3px;line-height:40px;font-size:21px;color:#3a414b">审查</div>
<svg style="left:2462.6px;top:431.9px" width="12" height="18" viewBox="0 0 12 18" ><path d="M3 2.6 L9 9 L3 15.4" fill="none" stroke="#9aa7b8" stroke-width="3.5" stroke-linecap="round" stroke-linejoin="round"/></svg>
<div class="p" style="top:493.2px">已完成<span class="la" style="letter-spacing:0.29px;">Chrome</span>扩展的开发，实现了以下功能<span class="la" style="letter-spacing:0.29px;">:</span></div>
<div class="bu" style="top:548.5px"></div><div class="li" style="top:532.2px">创建了基于<span class="la">Manifest V3</span>的<span class="la">Chrome</span>扩展配置</div>
<div class="bu" style="top:595.0px"></div><div class="li" style="letter-spacing:0.03px;top:578.7px">实现了网页文本选择和浮动翻译按钮功能</div>
<div class="bu" style="top:641.5px"></div><div class="li" style="top:625.2px">集成了腾讯云翻译<span class="la" style="letter-spacing:-0.83px;">API</span>，支持中英文互译</div>
<div class="bu" style="top:687.5px"></div><div class="li" style="top:671.2px">添加了侧边栏展示翻译结果</div>
<div class="bu" style="top:733.5px"></div><div class="li" style="top:717.2px">提供了<span class="la" style="letter-spacing:-0.82px;">API Key</span>设置界面</div>
<div class="bu" style="top:779.5px"></div><div class="li" style="top:763.2px">优化了<span class="la" style="letter-spacing:-0.50px;">UI</span>设计和用户体验</div>
<div class="p" style="top:810.2px">主要文件包括<span class="la" style="letter-spacing:2.20px;">:</span></div>
<div class="bu" style="top:865.5px"></div><div class="li" style="top:849.2px"><span class="la" style="letter-spacing:0.03px;">manifest.json</span>：扩展配置文件</div>
<div class="bu" style="top:911.5px"></div><div class="li" style="top:895.2px"><span class="la" style="letter-spacing:0.58px;">popup.html/js</span>：设置页面及其逻辑</div>
<div class="bu" style="top:957.5px"></div><div class="li" style="top:941.2px"><span class="la" style="letter-spacing:0.04px;">content.js</span>：核心翻译功能实现</div>
<div class="bu" style="top:1003.5px"></div><div class="li" style="top:987.2px"><span class="la" style="letter-spacing:-0.79px;">styles.css</span>：<span class="la" style="letter-spacing:-0.79px;">UI</span>样式定义</div>
<div class="p" style="top:1033.2px">扩展支持在任意网页选中文本后显示翻译按钮，点击后调用腾讯云<span class="la" style="letter-spacing:-0.92px;">API</span>进行</div>
<div class="p" style="top:1072.8px">翻译，并在右侧边栏实时展示翻译结果。整个过程流畅，界面美观，支持流</div>
<div class="p" style="top:1112.4px">式输出翻译结果。</div>
</div></div>
<div class="abs" style="left:1755px;top:1188px;width:751px;height:71.5px;border:1.5px solid #e4e8ef;border-radius:11px;background:#fff;box-shadow:0 3px 10px rgba(30,40,60,.06)"></div>
<svg style="left:1776px;top:1211px" width="31" height="27" viewBox="0 0 31 27" ><defs><linearGradient id="sg" x1="0" y1="0.5" x2="1" y2="0.5"><stop offset="0" stop-color="#d45fc8"/><stop offset="0.45" stop-color="#a95cf8"/><stop offset="1" stop-color="#9b5cff"/></linearGradient></defs><path d="M19.7 6.2 C20.8 11.8 22.6 13.6 28.6 14.9 C22.6 16.2 20.8 18 19.7 24.4 C18.6 18 16.8 16.2 10.8 14.9 C16.8 13.6 18.6 11.8 19.7 6.2 Z" fill="url(#sg)" stroke="url(#sg)" stroke-width="1.4" stroke-linejoin="round"/><path d="M6.2 0.6 C6.9 4.2 8 5.2 11.2 5.8 C8 6.4 6.9 7.4 6.2 11 C5.5 7.4 4.4 6.4 1.2 5.8 C4.4 5.2 5.5 4.2 6.2 0.6 Z" fill="#f0506e" stroke="#f0506e" stroke-width="0.5" stroke-linejoin="round"/></svg>
<div class="t" style="left:1818.5px;top:1205.5px;line-height:40px;font-size:22.75px;color:#1d2127">1</div>
<div class="t" style="letter-spacing:0.12px;left:1842px;top:1205.5px;line-height:40px;font-size:22.75px;color:#2b3139">个文件需要审查</div>
<svg style="left:2017px;top:1215px" width="12" height="18" viewBox="0 0 12 18" ><path d="M3 2.6 L9 9 L3 15.4" fill="none" stroke="#64748b" stroke-width="3.2" stroke-linecap="round" stroke-linejoin="round"/></svg>
<div class="t" style="letter-spacing:-0.33px;left:2243px;top:1203.4px;line-height:40px;font-size:22.75px;color:#2b3139">全部拒绝</div>
<div class="abs" style="left:2362px;top:1199px;width:133px;height:49px;border-radius:8px;background:#f0f2f5"></div>
<div class="t" style="letter-spacing:-0.33px;left:2383px;top:1203.4px;line-height:40px;font-size:22.75px;color:#2b3139">全部接受</div>
<div class="abs" style="left:1755px;top:1281px;width:753px;height:160px;border-radius:11px;background:linear-gradient(90deg,#ff7f5f 0%,#ff7a78 25%,#ff7acb 48%,#c48bff 68%,#a99cff 85%,#a99cff 100%)"></div>
<div class="abs" style="left:1756.8px;top:1282.8px;width:749.4px;height:160px;border-radius:9.4px;background:#fff"></div>
<div class="t" style="left:1773px;top:1292px;line-height:40px;font-size:22.75px;color:#a3afc2"><span class="la">"</span><span style="font-family:'DejaVu Sans',sans-serif;font-size:23.7px;letter-spacing:-8.3px;margin-left:-3.2px;position:relative;top:-0.5px">↑↓</span><span class="la" style="margin-left:3.6px">"</span><span style="margin-left:0.8px"> 切换历史输入，</span><span class="la" style="margin-left:2.2px;letter-spacing:0.22px">"Shift+Enter"</span> 换行</div>
<svg style="left:1776px;top:1387.4px" width="19" height="19" viewBox="0 0 19 19" ><path d="M7.6 0.4 L5 18.6 M14.4 0.4 L11.8 18.6 M1.8 6.3 H18.4 M0.6 12.7 H17.2" fill="none" stroke="#2b3139" stroke-width="2.2"/></svg>
<div class="t" style="letter-spacing:0.50px;left:1798px;top:1376.5px;line-height:40px;font-size:22.75px;color:#64748b">引用</div>
<svg style="left:1859.6px;top:1386.6px" width="20" height="20" viewBox="0 0 20 20" ><rect x="1.2" y="1.6" width="17.6" height="16.8" fill="none" stroke="#2b3139" stroke-width="2.2"/><path d="M3.6 15.8 L8.6 11.2 L11 13.4 L16.4 7.6 V15.8 Z" fill="#2b3139"/><circle cx="6.4" cy="6.6" r="1.7" fill="#2b3139"/></svg>
<div class="t" style="letter-spacing:-0.50px;left:1889px;top:1376.5px;line-height:40px;font-size:22.75px;color:#64748b">图片</div>
<div class="abs" style="left:2249px;top:1378.8px;width:191px;height:34.5px;border-radius:8px;border:1.5px solid #e4e8ef;background:#fff"></div>
<svg style="left:2259px;top:1386.2px" width="17" height="18" viewBox="0 0 17 18" ><path d="M8.5 1.4 L15.4 5.2 V12.8 L8.5 16.6 L1.6 12.8 V5.2 Z M1.8 5.3 L8.5 9 L15.2 5.3 M8.5 9 V16.4" fill="none" stroke="#5b6778" stroke-width="1.7" stroke-linejoin="round"/></svg>
<div class="t" style="transform:scaleX(0.942);transform-origin:0 50%;left:2281px;top:1375.6px;line-height:40px;font-size:18.6px;color:#64748b">Claude-3.5-Sonnet</div>
<svg style="left:2460px;top:1383px" width="30" height="29" viewBox="0 0 30 29" ><path d="M28.8 0.6 L0.6 14.6 L11 18.6 L12.4 17.2 L14 19.6 L23.6 23.4 Z" fill="#a2afc0" stroke="#a2afc0" stroke-width="0.8" stroke-linejoin="round"/><path d="M12.2 21.4 L17.4 23.4 L13.4 27.6 Z" fill="#a2afc0" stroke="#a2afc0" stroke-width="0.8" stroke-linejoin="round"/></svg>
</div></body></html>
